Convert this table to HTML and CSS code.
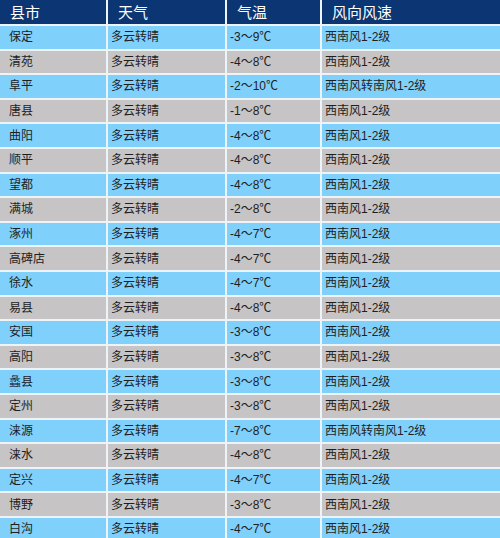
FILE: index.html
```html
<!DOCTYPE html>
<html lang="zh">
<head>
<meta charset="utf-8">
<title>天气</title>
<link rel="stylesheet" href="styles.css">
</head>
<body>
<div class="table">
  <div class="cell head first">县市</div><div class="cell head">天气</div><div class="cell head">气温</div><div class="cell head">风向风速</div>
  <div class="cell blue first">保定</div><div class="cell blue">多云转晴</div><div class="cell blue">-3～9℃</div><div class="cell blue">西南风1-2级</div>
  <div class="cell grey first">清苑</div><div class="cell grey">多云转晴</div><div class="cell grey">-4～8℃</div><div class="cell grey">西南风1-2级</div>
  <div class="cell blue first">阜平</div><div class="cell blue">多云转晴</div><div class="cell blue">-2～10℃</div><div class="cell blue">西南风转南风1-2级</div>
  <div class="cell grey first">唐县</div><div class="cell grey">多云转晴</div><div class="cell grey">-1～8℃</div><div class="cell grey">西南风1-2级</div>
  <div class="cell blue first">曲阳</div><div class="cell blue">多云转晴</div><div class="cell blue">-4～8℃</div><div class="cell blue">西南风1-2级</div>
  <div class="cell grey first">顺平</div><div class="cell grey">多云转晴</div><div class="cell grey">-4～8℃</div><div class="cell grey">西南风1-2级</div>
  <div class="cell blue first">望都</div><div class="cell blue">多云转晴</div><div class="cell blue">-4～8℃</div><div class="cell blue">西南风1-2级</div>
  <div class="cell grey first">满城</div><div class="cell grey">多云转晴</div><div class="cell grey">-2～8℃</div><div class="cell grey">西南风1-2级</div>
  <div class="cell blue first">涿州</div><div class="cell blue">多云转晴</div><div class="cell blue">-4～7℃</div><div class="cell blue">西南风1-2级</div>
  <div class="cell grey first">高碑店</div><div class="cell grey">多云转晴</div><div class="cell grey">-4～7℃</div><div class="cell grey">西南风1-2级</div>
  <div class="cell blue first">徐水</div><div class="cell blue">多云转晴</div><div class="cell blue">-4～7℃</div><div class="cell blue">西南风1-2级</div>
  <div class="cell grey first">易县</div><div class="cell grey">多云转晴</div><div class="cell grey">-4～8℃</div><div class="cell grey">西南风1-2级</div>
  <div class="cell blue first">安国</div><div class="cell blue">多云转晴</div><div class="cell blue">-3～8℃</div><div class="cell blue">西南风1-2级</div>
  <div class="cell grey first">高阳</div><div class="cell grey">多云转晴</div><div class="cell grey">-3～8℃</div><div class="cell grey">西南风1-2级</div>
  <div class="cell blue first">蠡县</div><div class="cell blue">多云转晴</div><div class="cell blue">-3～8℃</div><div class="cell blue">西南风1-2级</div>
  <div class="cell grey first">定州</div><div class="cell grey">多云转晴</div><div class="cell grey">-3～8℃</div><div class="cell grey">西南风1-2级</div>
  <div class="cell blue first">涞源</div><div class="cell blue">多云转晴</div><div class="cell blue">-7～8℃</div><div class="cell blue">西南风转南风1-2级</div>
  <div class="cell grey first">涞水</div><div class="cell grey">多云转晴</div><div class="cell grey">-4～8℃</div><div class="cell grey">西南风1-2级</div>
  <div class="cell blue first">定兴</div><div class="cell blue">多云转晴</div><div class="cell blue">-4～7℃</div><div class="cell blue">西南风1-2级</div>
  <div class="cell grey first">博野</div><div class="cell grey">多云转晴</div><div class="cell grey">-3～8℃</div><div class="cell grey">西南风1-2级</div>
  <div class="cell blue first">白沟</div><div class="cell blue">多云转晴</div><div class="cell blue">-4～7℃</div><div class="cell blue">西南风1-2级</div>
</div>
</body>
</html>
```
FILE: styles.css
```css
html, body {
  margin: 0;
  padding: 0;
  background: #ffffff;
  overflow: hidden;
}
body {
  font-family: "Liberation Sans", "Noto Sans CJK SC", sans-serif;
  width: 500px;
  height: 538px;
}
.table {
  display: grid;
  grid-template-columns: 106px 117px 93px 1fr;
  grid-template-rows: 24px;
  grid-auto-rows: 22.6px;
  column-gap: 2px;
  row-gap: 2px;
  background: #eef3f8;
}
.cell {
  display: flex;
  align-items: center;
  padding-left: 3px;
  padding-bottom: 3px;
  font-size: 12px;
  color: #1e1e1e;
  white-space: nowrap;
  overflow: hidden;
}
.cell.first {
  padding-left: 9px;
}
.head {
  background: #0c3573;
  color: #ffffff;
  font-size: 15px;
  padding-left: 10px;
  padding-bottom: 2px;
}
.head.first {
  padding-left: 10px;
}
.blue {
  background: #80d0fc;
}
.grey {
  background: #c6c4c4;
}
```
